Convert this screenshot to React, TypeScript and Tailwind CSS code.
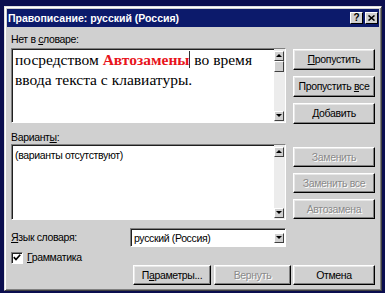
import React from "react";

const ui = "font-['Liberation_Sans',Arial,sans-serif] text-[10.5px] tracking-[-0.35px] leading-[13px] text-black";

function Btn({ children, disabled, w = "w-[82px]", h = "h-[21px]" }: { children: React.ReactNode; disabled?: boolean; w?: string; h?: string }) {
    return (
        <div className={`${w} ${h} flex items-center justify-center bg-[#d0d0d0] border border-t-white border-l-white border-r-black border-b-black shadow-[inset_-1px_-1px_#808080,inset_1px_1px_#e8e8e8] ${disabled ? "text-[#8a8a8a] [text-shadow:1px_1px_0_#ffffff]" : "text-black"}`}>
            <span className="whitespace-pre">{children}</span>
        </div>
    )
}

function U({ children }: { children: React.ReactNode }) {
    return <span className="underline underline-offset-[1px]">{children}</span>
}

function Arrow({ down }: { down?: boolean }) {
    return (
        <div className="w-[10px] h-[10px] flex items-center justify-center bg-[#d0d0d0] border border-t-white border-l-white border-r-[#404040] border-b-[#404040]">
            <svg width="6" height="4" viewBox="0 0 6 4">
                {down ? <path d="M0 0h6L3 3z" fill="#000" /> : <path d="M0 3h6L3 0z" fill="#000" />}
            </svg>
        </div>
    )
}

function ScrollBar({ thumb }: { thumb?: boolean }) {
    return (
        <div className="w-[11px] h-full flex flex-col bg-[#ececec] pt-[2px] pb-[1px]">
            <Arrow />
            {thumb && <div className="w-[10px] h-[11px] bg-[#d0d0d0] border border-t-white border-l-white border-r-[#404040] border-b-[#404040]" />}
            <div className="flex-1" />
            <Arrow down />
        </div>
    )
}

function Field({ children, h, thumb }: { children: React.ReactNode; h: string; thumb?: boolean }) {
    return (
        <div className={`${h} w-[275px] flex bg-white border border-t-[#808080] border-l-[#808080] border-r-white border-b-white shadow-[inset_1px_1px_#202020]`}>
            <div className="flex-1 pl-[3px] pt-[1px] overflow-hidden">{children}</div>
            <ScrollBar thumb={thumb} />
        </div>
    )
}

export default function App() {
    return (
        <div className={`w-[385px] h-[293px] bg-[#0b0e4f] overflow-hidden pt-[6px] pl-[4px] ${ui}`}>
            <div className="w-[378px] h-[285px] bg-[#d0d0d0] border border-[#e0e0e0] border-r-[#404040] border-b-[#404040] shadow-[inset_1px_1px_#ffffff,inset_-1px_-1px_#808080] p-[2px]">
                <div className="h-[18px] bg-[#0c1a6b] flex items-center justify-between pl-[1px] pr-[1px]">
                    <span className="text-white font-bold text-[10.5px] tracking-normal">Правописание: русский (Россия)</span>
                    <div className="flex gap-[2px]">
                        <div className="w-[13px] h-[12px] bg-[#d0d0d0] border border-t-white border-l-white border-r-black border-b-black flex items-center justify-center font-bold text-[10px] leading-[10px]">?</div>
                        <div className="w-[13px] h-[12px] bg-[#d0d0d0] border border-t-white border-l-white border-r-black border-b-black flex items-center justify-center">
                            <svg width="7" height="6" viewBox="0 0 7 6"><path d="M0.5 0.5l6 5M6.5 0.5l-6 5" stroke="#000" strokeWidth="1.6" /></svg>
                        </div>
                    </div>
                </div>
                <div className="pl-[4px] pt-[6px]">
                    <div className="flex gap-[7px]">
                        <div className="flex flex-col">
                            <div className="h-[15px]">Нет в <U>с</U>ловаре:</div>
                            <Field h="h-[75px]" thumb>
                                <div className="font-['Liberation_Serif','Times_New_Roman',serif] text-[15.5px] tracking-normal leading-[20px] text-black">
                                    посредством <span className="text-[#e8141c] font-bold">Автозамены</span><span className="inline-block w-[1px] h-[17px] bg-[#303030] align-[-3px]" /> во время<br />
                                    ввода текста с клавиатуры.
                                </div>
                            </Field>
                        </div>
                        <div className="flex flex-col gap-[6px] pt-[16px]">
                            <Btn><U>П</U>ропустить</Btn>
                            <Btn>Пропустить <U>в</U>се</Btn>
                            <Btn><U>Д</U>обавить</Btn>
                        </div>
                    </div>
                    <div className="flex gap-[7px] mt-[7px]">
                        <div className="flex flex-col">
                            <div className="h-[13px]">Вариант<U>ы</U>:</div>
                            <Field h="h-[76px]">
                                <div className="pt-[3px]">(варианты отсутствуют)</div>
                            </Field>
                        </div>
                        <div className="flex flex-col gap-[6px] pt-[16px]">
                            <Btn disabled h="h-[20px]">Заменить</Btn>
                            <Btn disabled h="h-[20px]">Заменить все</Btn>
                            <Btn disabled h="h-[20px]">Автозамена</Btn>
                        </div>
                    </div>
                    <div className="flex items-center h-[19px] mt-[8px]">
                        <div className="w-[119px]"><U>Я</U>зык словаря:</div>
                        <div className="w-[156px] h-[19px] flex items-center bg-white border border-t-[#808080] border-l-[#808080] border-r-white border-b-white shadow-[inset_1px_1px_#202020] pr-[1px] pt-[1px]">
                            <div className="flex-1 pl-[3px]">русский (Россия)</div>
                            <Arrow down />
                        </div>
                    </div>
                    <div className="flex items-center h-[13px] mt-[4px]">
                        <div className="w-[12px] h-[12px] bg-white border border-t-[#808080] border-l-[#808080] border-r-white border-b-white shadow-[inset_1px_1px_#202020] flex items-center justify-center">
                            <svg width="8" height="7" viewBox="0 0 8 7"><path d="M0.8 3.2l2.2 2.3L7.2 0.8" stroke="#000" strokeWidth="1.7" fill="none" /></svg>
                        </div>
                        <span className="ml-[4px]"><U>Г</U>рамматика</span>
                    </div>
                    <div className="flex mt-[1px] ml-[122px]">
                        <Btn w="w-[78px]" h="h-[20px]">П<U>а</U>раметры...</Btn>
                        <div className="w-[3px]" />
                        <Btn w="w-[77px]" h="h-[20px]" disabled>Вернуть</Btn>
                        <div className="w-[2px]" />
                        <Btn w="w-[82px]" h="h-[20px]">Отмена</Btn>
                    </div>
                </div>
            </div>
        </div>
    )
}
